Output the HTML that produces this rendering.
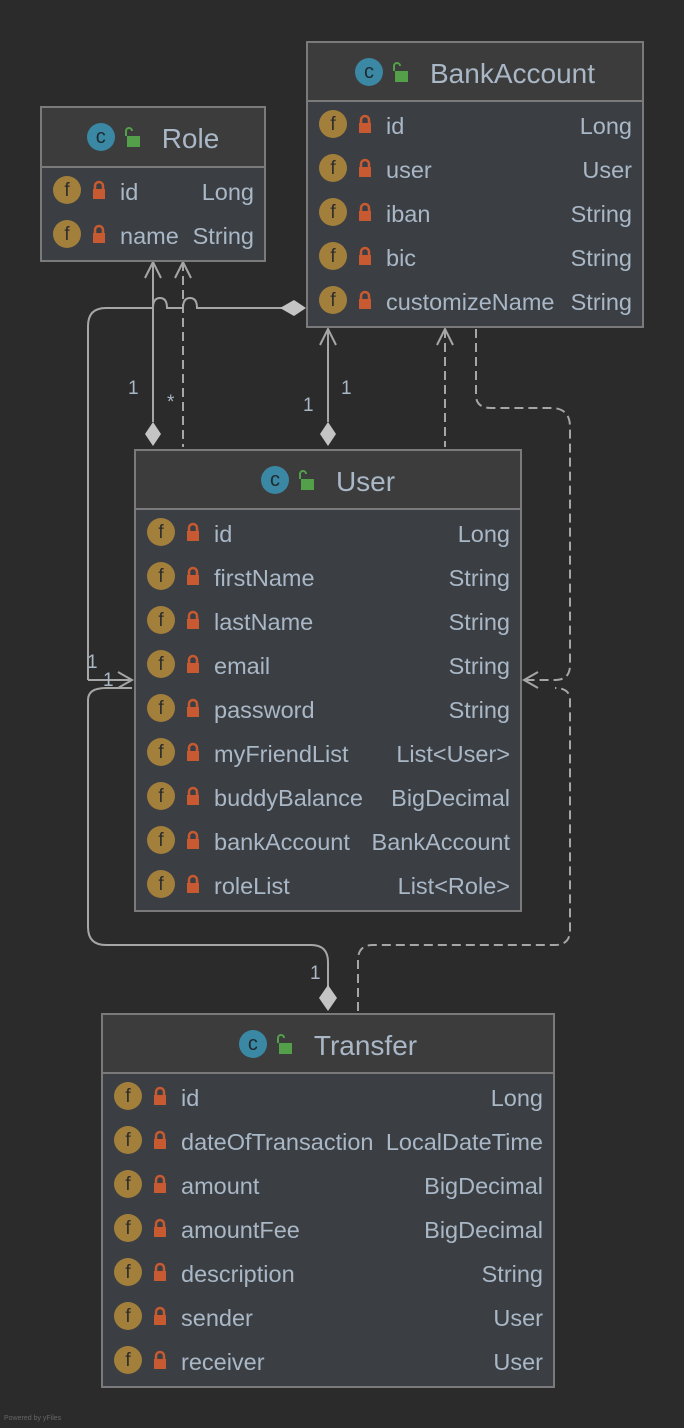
<!DOCTYPE html>
<html><head><meta charset="utf-8"><style>
body{margin:0;width:684px;height:1428px;background:#2b2b2b;position:relative;overflow:hidden;font-family:"Liberation Sans",sans-serif;color:#a9b7c6}
.box{position:absolute;border:2px solid #7a7a7a;background:#3b3f43;box-sizing:border-box}
.hd{background:#3c3c3c;border-bottom:2px solid #7a7a7a;height:59px;display:flex;align-items:center;justify-content:center;font-size:28px;box-sizing:border-box;padding-top:4px}
.hd .ci,.hd .ol{position:relative;top:-2px}
.ci{width:28px;height:28px;border-radius:50%;background:#3a88a3;color:#1e2a30;font-size:20px;display:flex;align-items:center;justify-content:center;margin-right:8px;line-height:1}
.ol{width:17px;height:20px;margin-right:22px}
.row{height:44px;position:relative;font-size:23.5px}
.f{position:absolute;left:11px;top:8px;width:28px;height:28px;border-radius:50%;background:#a37f3c;color:#2d2d2d;font-size:19px;display:flex;align-items:center;justify-content:center;line-height:1}
.lk{position:absolute;left:50px;top:12px;width:14px;height:20px}
.n{position:absolute;left:78px;top:11px}
.t{position:absolute;right:10px;top:11px}
.lbl{position:absolute;font-size:19px;color:#a9b7c6}
</style></head><body>
<svg width="684" height="1428" style="position:absolute;left:0;top:0" fill="none" stroke="#a6a6a6" stroke-width="2">
<path d="M153 262V422"/><path d="M145 278L153 262L161 278"/>
<polygon points="153,422 161,434 153,446 145,434" fill="#c4c4c4" stroke="none"/>
<path d="M183 262V447" stroke-dasharray="9,5"/><path d="M175 278L183 262L191 278"/>
<path d="M282 308H197q0-10-7-10t-7 10H167q0-10-7-10t-7 10H106q-18 0-18 18V680"/>
<polygon points="306,308 294,300 280,308 294,316" fill="#c4c4c4" stroke="none"/>
<path d="M88 680h44M118 672l14 8-14 8"/>
<path d="M328 990V962q0-17-17-17H106q-18 0-18-18V700q0-12 18-12H132"/>
<polygon points="328,985 337,998 328,1011 319,998" fill="#c4c4c4" stroke="none"/>
<path d="M328 329V422"/><path d="M320 345L328 329L336 345"/>
<polygon points="328,422 336,434 328,446 320,434" fill="#c4c4c4" stroke="none"/>
<path d="M445 329V447" stroke-dasharray="9,5"/><path d="M437 345L445 329L453 345"/>
<path d="M476 329V395q0 13 15 13h60q19 0 19 19V665q0 15-15 15H524" stroke-dasharray="9,5"/>
<path d="M538 672L524 680L538 688"/>
<path d="M358 1011V960q0-15 15-15h182q15 0 15-15V700q0-12-15-12" stroke-dasharray="9,5"/>
</svg>
<div class="lbl" style="left:128px;top:378px">1</div>
<div class="lbl" style="left:167px;top:392px">*</div>
<div class="lbl" style="left:303px;top:395px">1</div>
<div class="lbl" style="left:341px;top:378px">1</div>
<div class="lbl" style="left:87px;top:652px">1</div>
<div class="lbl" style="left:103px;top:670px">1</div>
<div class="lbl" style="left:310px;top:963px">1</div>

<div class="box" style="left:40px;top:106px;width:226px;height:156px">
<div class="hd" style="height:60px"><div class="ci">c</div><svg class="ol" viewBox="0 0 17 20"><path d="M3 9V4a3 3 0 0 1 6 0" stroke="#54a04a" stroke-width="2" fill="none"/><rect x="4" y="9" width="13" height="11" fill="#54a04a"/></svg>Role</div>
<div class="row"><div class="f">f</div><svg class="lk" viewBox="0 0 14 20"><path d="M3 9V6a4 4 0 0 1 8 0v3" stroke="#c75a30" stroke-width="2.5" fill="none"/><rect x="1" y="9" width="12" height="10" fill="#c75a30"/></svg><span class="n">id</span><span class="t">Long</span></div>
<div class="row"><div class="f">f</div><svg class="lk" viewBox="0 0 14 20"><path d="M3 9V6a4 4 0 0 1 8 0v3" stroke="#c75a30" stroke-width="2.5" fill="none"/><rect x="1" y="9" width="12" height="10" fill="#c75a30"/></svg><span class="n">name</span><span class="t">String</span></div>
</div>

<div class="box" style="left:306px;top:41px;width:338px;height:287px">
<div class="hd"><div class="ci">c</div><svg class="ol" viewBox="0 0 17 20"><path d="M3 9V4a3 3 0 0 1 6 0" stroke="#54a04a" stroke-width="2" fill="none"/><rect x="4" y="9" width="13" height="11" fill="#54a04a"/></svg>BankAccount</div>
<div class="row"><div class="f">f</div><svg class="lk" viewBox="0 0 14 20"><path d="M3 9V6a4 4 0 0 1 8 0v3" stroke="#c75a30" stroke-width="2.5" fill="none"/><rect x="1" y="9" width="12" height="10" fill="#c75a30"/></svg><span class="n">id</span><span class="t">Long</span></div>
<div class="row"><div class="f">f</div><svg class="lk" viewBox="0 0 14 20"><path d="M3 9V6a4 4 0 0 1 8 0v3" stroke="#c75a30" stroke-width="2.5" fill="none"/><rect x="1" y="9" width="12" height="10" fill="#c75a30"/></svg><span class="n">user</span><span class="t">User</span></div>
<div class="row"><div class="f">f</div><svg class="lk" viewBox="0 0 14 20"><path d="M3 9V6a4 4 0 0 1 8 0v3" stroke="#c75a30" stroke-width="2.5" fill="none"/><rect x="1" y="9" width="12" height="10" fill="#c75a30"/></svg><span class="n">iban</span><span class="t">String</span></div>
<div class="row"><div class="f">f</div><svg class="lk" viewBox="0 0 14 20"><path d="M3 9V6a4 4 0 0 1 8 0v3" stroke="#c75a30" stroke-width="2.5" fill="none"/><rect x="1" y="9" width="12" height="10" fill="#c75a30"/></svg><span class="n">bic</span><span class="t">String</span></div>
<div class="row"><div class="f">f</div><svg class="lk" viewBox="0 0 14 20"><path d="M3 9V6a4 4 0 0 1 8 0v3" stroke="#c75a30" stroke-width="2.5" fill="none"/><rect x="1" y="9" width="12" height="10" fill="#c75a30"/></svg><span class="n">customizeName</span><span class="t">String</span></div>
</div>

<div class="box" style="left:134px;top:449px;width:388px;height:463px">
<div class="hd"><div class="ci">c</div><svg class="ol" viewBox="0 0 17 20"><path d="M3 9V4a3 3 0 0 1 6 0" stroke="#54a04a" stroke-width="2" fill="none"/><rect x="4" y="9" width="13" height="11" fill="#54a04a"/></svg>User</div>
<div class="row"><div class="f">f</div><svg class="lk" viewBox="0 0 14 20"><path d="M3 9V6a4 4 0 0 1 8 0v3" stroke="#c75a30" stroke-width="2.5" fill="none"/><rect x="1" y="9" width="12" height="10" fill="#c75a30"/></svg><span class="n">id</span><span class="t">Long</span></div>
<div class="row"><div class="f">f</div><svg class="lk" viewBox="0 0 14 20"><path d="M3 9V6a4 4 0 0 1 8 0v3" stroke="#c75a30" stroke-width="2.5" fill="none"/><rect x="1" y="9" width="12" height="10" fill="#c75a30"/></svg><span class="n">firstName</span><span class="t">String</span></div>
<div class="row"><div class="f">f</div><svg class="lk" viewBox="0 0 14 20"><path d="M3 9V6a4 4 0 0 1 8 0v3" stroke="#c75a30" stroke-width="2.5" fill="none"/><rect x="1" y="9" width="12" height="10" fill="#c75a30"/></svg><span class="n">lastName</span><span class="t">String</span></div>
<div class="row"><div class="f">f</div><svg class="lk" viewBox="0 0 14 20"><path d="M3 9V6a4 4 0 0 1 8 0v3" stroke="#c75a30" stroke-width="2.5" fill="none"/><rect x="1" y="9" width="12" height="10" fill="#c75a30"/></svg><span class="n">email</span><span class="t">String</span></div>
<div class="row"><div class="f">f</div><svg class="lk" viewBox="0 0 14 20"><path d="M3 9V6a4 4 0 0 1 8 0v3" stroke="#c75a30" stroke-width="2.5" fill="none"/><rect x="1" y="9" width="12" height="10" fill="#c75a30"/></svg><span class="n">password</span><span class="t">String</span></div>
<div class="row"><div class="f">f</div><svg class="lk" viewBox="0 0 14 20"><path d="M3 9V6a4 4 0 0 1 8 0v3" stroke="#c75a30" stroke-width="2.5" fill="none"/><rect x="1" y="9" width="12" height="10" fill="#c75a30"/></svg><span class="n">myFriendList</span><span class="t">List&lt;User&gt;</span></div>
<div class="row"><div class="f">f</div><svg class="lk" viewBox="0 0 14 20"><path d="M3 9V6a4 4 0 0 1 8 0v3" stroke="#c75a30" stroke-width="2.5" fill="none"/><rect x="1" y="9" width="12" height="10" fill="#c75a30"/></svg><span class="n">buddyBalance</span><span class="t">BigDecimal</span></div>
<div class="row"><div class="f">f</div><svg class="lk" viewBox="0 0 14 20"><path d="M3 9V6a4 4 0 0 1 8 0v3" stroke="#c75a30" stroke-width="2.5" fill="none"/><rect x="1" y="9" width="12" height="10" fill="#c75a30"/></svg><span class="n">bankAccount</span><span class="t">BankAccount</span></div>
<div class="row"><div class="f">f</div><svg class="lk" viewBox="0 0 14 20"><path d="M3 9V6a4 4 0 0 1 8 0v3" stroke="#c75a30" stroke-width="2.5" fill="none"/><rect x="1" y="9" width="12" height="10" fill="#c75a30"/></svg><span class="n">roleList</span><span class="t">List&lt;Role&gt;</span></div>
</div>

<div class="box" style="left:101px;top:1013px;width:454px;height:375px">
<div class="hd"><div class="ci">c</div><svg class="ol" viewBox="0 0 17 20"><path d="M3 9V4a3 3 0 0 1 6 0" stroke="#54a04a" stroke-width="2" fill="none"/><rect x="4" y="9" width="13" height="11" fill="#54a04a"/></svg>Transfer</div>
<div class="row"><div class="f">f</div><svg class="lk" viewBox="0 0 14 20"><path d="M3 9V6a4 4 0 0 1 8 0v3" stroke="#c75a30" stroke-width="2.5" fill="none"/><rect x="1" y="9" width="12" height="10" fill="#c75a30"/></svg><span class="n">id</span><span class="t">Long</span></div>
<div class="row"><div class="f">f</div><svg class="lk" viewBox="0 0 14 20"><path d="M3 9V6a4 4 0 0 1 8 0v3" stroke="#c75a30" stroke-width="2.5" fill="none"/><rect x="1" y="9" width="12" height="10" fill="#c75a30"/></svg><span class="n">dateOfTransaction</span><span class="t">LocalDateTime</span></div>
<div class="row"><div class="f">f</div><svg class="lk" viewBox="0 0 14 20"><path d="M3 9V6a4 4 0 0 1 8 0v3" stroke="#c75a30" stroke-width="2.5" fill="none"/><rect x="1" y="9" width="12" height="10" fill="#c75a30"/></svg><span class="n">amount</span><span class="t">BigDecimal</span></div>
<div class="row"><div class="f">f</div><svg class="lk" viewBox="0 0 14 20"><path d="M3 9V6a4 4 0 0 1 8 0v3" stroke="#c75a30" stroke-width="2.5" fill="none"/><rect x="1" y="9" width="12" height="10" fill="#c75a30"/></svg><span class="n">amountFee</span><span class="t">BigDecimal</span></div>
<div class="row"><div class="f">f</div><svg class="lk" viewBox="0 0 14 20"><path d="M3 9V6a4 4 0 0 1 8 0v3" stroke="#c75a30" stroke-width="2.5" fill="none"/><rect x="1" y="9" width="12" height="10" fill="#c75a30"/></svg><span class="n">description</span><span class="t">String</span></div>
<div class="row"><div class="f">f</div><svg class="lk" viewBox="0 0 14 20"><path d="M3 9V6a4 4 0 0 1 8 0v3" stroke="#c75a30" stroke-width="2.5" fill="none"/><rect x="1" y="9" width="12" height="10" fill="#c75a30"/></svg><span class="n">sender</span><span class="t">User</span></div>
<div class="row"><div class="f">f</div><svg class="lk" viewBox="0 0 14 20"><path d="M3 9V6a4 4 0 0 1 8 0v3" stroke="#c75a30" stroke-width="2.5" fill="none"/><rect x="1" y="9" width="12" height="10" fill="#c75a30"/></svg><span class="n">receiver</span><span class="t">User</span></div>
</div>
<div style="position:absolute;left:4px;top:1415px;font-size:7px;color:#666">Powered by yFiles</div>
</body></html>
